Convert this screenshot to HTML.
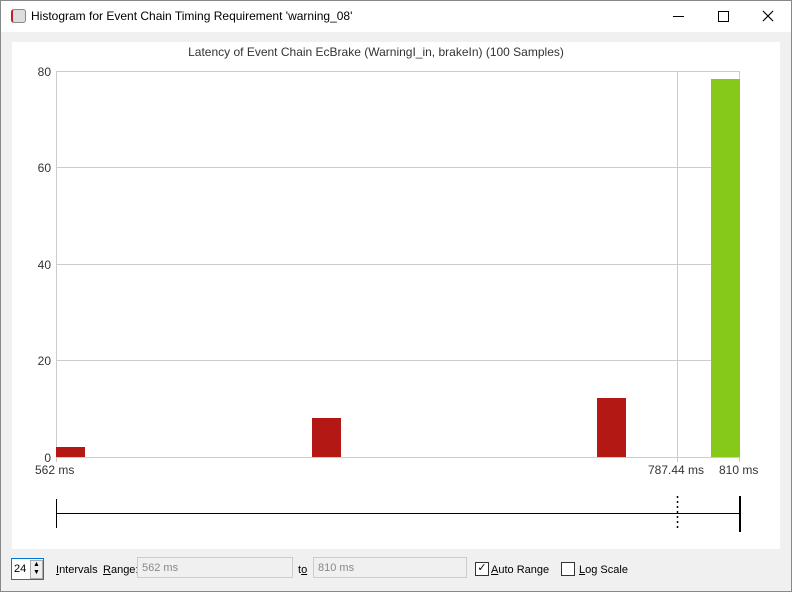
<!DOCTYPE html>
<html><head><style>
body{margin:0;width:792px;height:592px;overflow:hidden;font-family:"Liberation Sans",sans-serif;}
.win{position:absolute;left:0;top:0;width:790px;height:590px;border:1px solid #888;background:#f0f0f0;}
.title{position:absolute;left:0;top:0;width:790px;height:31px;background:#fff;}
.t{position:absolute;font-size:12px;color:#333;}
.in{position:absolute;height:21px;border:1px solid #ccc;background:#f0f0f0;font-size:11px;color:#888;line-height:21px;padding-left:4px;box-sizing:border-box;}
</style></head><body>
<div class="win">
<div class="title">
<div style="position:absolute;left:10px;top:8px;width:12px;height:12px;border:1px solid #888;border-radius:3px;background:#ddd;border-left:2px solid #b22;"></div>
<div class="t" style="left:30px;top:8px;font-size:12px;color:#000;">Histogram for Event Chain Timing Requirement 'warning_08'</div>
<div style="position:absolute;left:672px;top:15px;width:11px;height:1px;background:#000;"></div>
<div style="position:absolute;left:717px;top:10px;width:9px;height:9px;border:1px solid #000;"></div>
<svg style="position:absolute;left:761px;top:9px" width="12" height="12"><path d="M1 1L11 11M11 1L1 11" stroke="#000" stroke-width="1.2"/></svg>
</div>
<div style="position:absolute;left:11px;top:41px;width:768px;height:507px;background:#fff;"></div>
<svg style="position:absolute;left:-1px;top:-1px" width="792" height="592">
<g stroke="#ccc" stroke-width="1">
<line x1="56" y1="71.5" x2="740" y2="71.5"/><line x1="56" y1="167.5" x2="740" y2="167.5"/>
<line x1="56" y1="264.5" x2="740" y2="264.5"/><line x1="56" y1="360.5" x2="740" y2="360.5"/>
<line x1="56" y1="457.5" x2="740" y2="457.5"/>
<line x1="56.5" y1="71" x2="56.5" y2="462"/><line x1="677.5" y1="71" x2="677.5" y2="462"/><line x1="739.5" y1="71" x2="739.5" y2="462"/>
</g>
<rect x="56" y="447" width="29" height="10" fill="#b31814"/>
<rect x="312" y="418" width="29" height="39" fill="#b31814"/>
<rect x="597" y="398" width="29" height="59" fill="#b31814"/>
<rect x="711" y="79" width="29" height="378" fill="#86c918"/>
<text x="376" y="56" font-size="12" fill="#333" text-anchor="middle" font-family="Liberation Sans">Latency of Event Chain EcBrake (WarningI_in, brakeIn) (100 Samples)</text>
<g font-size="12" fill="#333" text-anchor="end" font-family="Liberation Sans">
<text x="51" y="76">80</text><text x="51" y="172">60</text><text x="51" y="269">40</text><text x="51" y="365">20</text><text x="51" y="462">0</text></g>
<g font-size="12" fill="#333" font-family="Liberation Sans">
<text x="35" y="474">562 ms</text><text x="648" y="474">787.44 ms</text><text x="719" y="474">810 ms</text></g>
<line x1="56" y1="513.5" x2="740" y2="513.5" stroke="#000"/>
<line x1="56.5" y1="499" x2="56.5" y2="528" stroke="#000"/>
<line x1="740" y1="496" x2="740" y2="532" stroke="#000" stroke-width="2"/>
<line x1="677.5" y1="496" x2="677.5" y2="528" stroke="#000" stroke-dasharray="2,3" stroke-width="1.5"/>
</svg>
<div style="position:absolute;left:10px;top:557px;width:31px;height:20px;border:1px solid #0078d7;background:#fff;"></div>
<div class="t" style="left:13px;top:562px;font-size:11px;color:#000;">24</div>
<div style="position:absolute;left:29px;top:559px;width:11px;height:17px;border:1px solid #aaa;background:#eee;font-size:7px;line-height:8px;text-align:center;">▲<br>▼</div>
<div class="t" style="left:55px;top:563px;font-size:11px;color:#000;"><u>I</u>ntervals</div>
<div class="t" style="left:102px;top:563px;font-size:11px;color:#000;"><u>R</u>ange:</div>
<div class="in" style="left:136px;top:556px;width:156px;">562 ms</div>
<div class="t" style="left:297px;top:563px;font-size:11px;color:#000;">t<u>o</u></div>
<div class="in" style="left:312px;top:556px;width:154px;">810 ms</div>
<div style="position:absolute;left:474px;top:561px;width:12px;height:12px;border:1px solid #333;background:#fff;font-size:11px;line-height:11px;text-align:center;">✓</div>
<div class="t" style="left:490px;top:563px;font-size:11px;color:#000;"><u>A</u>uto Range</div>
<div style="position:absolute;left:560px;top:561px;width:12px;height:12px;border:1px solid #333;background:#fff;"></div>
<div class="t" style="left:578px;top:563px;font-size:11px;color:#000;"><u>L</u>og Scale</div>
</div>
</body></html>
